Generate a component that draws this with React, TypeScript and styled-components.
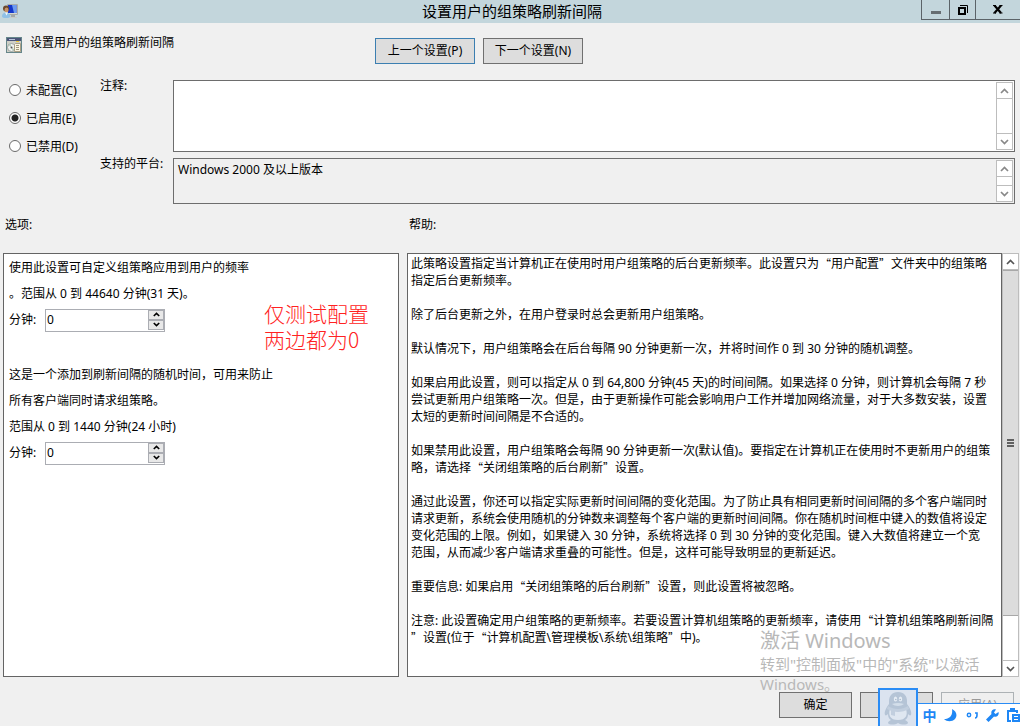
import React from 'react';
import styled, { createGlobalStyle, css } from 'styled-components';

const cjk = '"Noto Sans CJK SC"';
const uiFont = `"Noto Sans", ${cjk}, sans-serif`;

const Global = createGlobalStyle`
  *, *::before, *::after { box-sizing: border-box; }
  body { margin: 0; background: #f0f0f0; color: #000; font: 12px/17px ${uiFont}; }
  button, input, textarea { font: inherit; color: inherit; margin: 0; padding: 0; border-radius: 0; }
  h1, h2, p, fieldset { margin: 0; padding: 0; border: 0; font-weight: 400; font-size: inherit; }
`;

const Window = styled.div`
  position: relative;
  display: flex;
  flex-direction: column;
  min-height: 100vh;
  overflow: hidden;
`;

const TitleBar = styled.header`
  display: grid;
  grid-template-columns: 103px 1fr 99px;
  height: 23px;
  background: #c3d6dc;
`;

const TitleIcon = styled.div`
  padding: 3px 2px;
  line-height: 0;
`;

const Title = styled.h1`
  text-align: center;
  && { font-size: 15px; }
  line-height: 23px;
`;

const WindowControls = styled.div`
  display: grid;
  grid-template-columns: 28px 26px 1fr;
  height: 20px;
  border: solid #5b6368;
  border-width: 0 0 1px 1px;
`;

const ControlButton = styled.button`
  display: flex;
  align-items: center;
  justify-content: center;
  border: solid #5b6368;
  border-width: 0 1px 0 0;
  background: transparent;
  &:last-child { border-right: 0; }
`;

const Heading = styled.section`
  display: grid;
  grid-template-columns: 369px 1fr;
  padding: 14px 6px 0;
`;

const PolicyName = styled.h2`
  display: flex;
  gap: 8px;
  line-height: 12px;
  svg { flex: none; }
`;

const ButtonRow = styled.div`
  display: flex;
  gap: 8px;
  padding-top: 1px;
`;

const PushButton = styled.button<{ $wide?: boolean; $focused?: boolean }>`
  width: ${p => (p.$wide ? 100 : 73)}px;
  height: 26px;
  border: 1px solid ${p => (p.$focused ? '#3c7fb1' : '#707070')};
  background: #ddd;
  line-height: 22px;
  &:disabled { border-color: #adb2b5; background: #efefef; color: #9a9a9a; }
`;

const Settings = styled.section`
  display: grid;
  grid-template-columns: 91px 1fr;
  padding: 16px 5px 0 9px;
`;

const StateGroup = styled.fieldset`
  display: flex;
  flex-direction: column;
`;

const RadioLabel = styled.label`
  display: flex;
  align-items: center;
  gap: 5px;
  height: 28px;
  &:first-child { height: 20px; margin-bottom: 4px; }
`;

const Radio = styled.input`
  appearance: none;
  width: 12px;
  height: 12px;
  border: 1px solid #6a6a6a;
  border-radius: 50%;
  background: #fff;
  &:checked { background: radial-gradient(circle, #222 0 3px, #fff 4px); }
`;

const Fields = styled.div`
  display: flex;
  flex-direction: column;
  gap: 6px;
`;

const FieldRow = styled.div`
  display: grid;
  grid-template-columns: 73px 1fr;
  line-height: 12px;
`;

const MemoFrame = styled.div<{ $readOnly?: boolean }>`
  display: flex;
  height: ${p => (p.$readOnly ? 46 : 72)}px;
  padding: 1px;
  border: 1px solid #6d6d6d;
  background: ${p => (p.$readOnly ? '#f0f0f0' : '#fff')};
`;

const Memo = styled.textarea`
  flex: 1;
  min-width: 0;
  padding: 1px 3px;
  border: 0;
  outline: 0;
  resize: none;
  overflow: hidden;
  background: transparent;
  line-height: 17px;
`;

const Bar = styled.div<{ $large?: boolean }>`
  display: flex;
  flex-direction: column;
  flex: none;
  width: 17px;
  background: #fff;
  border: 1px solid #bdbdbd;
  color: ${p => (p.$large ? '#555' : '#888')};
`;

const BarButton = styled.button<{ $down?: boolean }>`
  display: flex;
  flex: none;
  align-items: center;
  justify-content: center;
  height: 16px;
  border: 0 solid #bdbdbd;
  background: #fff;
  ${p => (p.$down ? css`border-top-width: 1px;` : css`border-bottom-width: 1px;`)}
`;

const BarTrack = styled.div`
  display: flex;
  flex-direction: column;
  flex: 1;
`;

const BarThumb = styled.div`
  display: flex;
  align-items: center;
  justify-content: center;
  flex: 346;
  border: solid #a8a8a8;
  border-width: 1px 0;
  background: #dcdcdc;
  & + div { flex: 44; }
`;

const columns = css`
  display: grid;
  grid-template-columns: 396fr 612fr;
  column-gap: 8px;
  padding: 0 1px 0 3px;
`;

const PanelTitles = styled.div`
  ${columns}
  padding-top: 12px;
  padding-bottom: 20px;
  h2 { padding-left: 2px; }
`;

const Panels = styled.main`
  ${columns}
  flex: 1;
`;

const OptionsPanel = styled.section`
  position: relative;
  padding: 1px 5px;
  border: 1px solid #646464;
  background: #fff;
`;

const OptionGroup = styled.div`
  margin-bottom: 29px;
  line-height: 26px;
`;

const SpinRow = styled.div`
  display: flex;
  align-items: center;
  height: 26px;
  label { width: 36px; }
`;

const SpinBox = styled.div`
  display: flex;
  width: 120px;
  height: 23px;
  border: 1px solid #abadb3;
  background: #fff;
  input { flex: 1; min-width: 0; padding: 0 1px; border: 0; outline: 0; background: transparent; }
`;

const SpinButtons = styled.div`
  display: flex;
  flex-direction: column;
  width: 16px;
  padding-bottom: 1px;
  button {
    display: flex;
    flex: 1;
    align-items: center;
    justify-content: center;
    border: 1px solid #abadb3;
    background: #e8e8e8;
  }
`;

const Annotation = styled.p`
  position: absolute;
  left: 260px;
  top: 46px;
  color: #ff2222;
  && { font-size: 21px; font-weight: 300; }
  font-family: ${cjk}, sans-serif;
  line-height: 26px;
  white-space: pre;
`;

const HelpPanel = styled.section`
  display: flex;
`;

const HelpText = styled.div`
  flex: 1;
  min-width: 0;
  padding: 1px 3px;
  border: 1px solid #646464;
  background: #fff;
  white-space: pre;
  p { margin-bottom: 17px; }
`;

const HelpLine = styled.span`
  display: block;
  height: 17px;
`;

const QuoteMark = styled.span<{ $open: boolean }>`
  display: inline-block;
  width: 12px;
  font-family: ${cjk}, sans-serif;
  font-size: 11px;
  line-height: 12px;
  text-align: ${p => (p.$open ? 'right' : 'left')};
`;

const Footer = styled.footer`
  display: flex;
  justify-content: flex-end;
  gap: 8px;
  padding: 15px 6px 8px;
`;

const Watermark = styled.aside`
  position: absolute;
  right: 40px;
  bottom: 32px;
  width: 220px;
  color: #b8b8b8;
  font-size: 15px;
  line-height: 20px;
  white-space: pre;
  pointer-events: none;
  p:first-child { font-size: 20px; line-height: 26px; }
`;

const ImeBar = styled.aside`
  position: absolute;
  right: 0;
  bottom: 0;
  display: flex;
  align-items: flex-end;
`;

const ImeLogo = styled.div`
  width: 40px;
  height: 38px;
  border: 2px solid #2a8cf5;
  border-bottom: 0;
  background: #dbe3ef;
  line-height: 0;
`;

const ImeTools = styled.div`
  width: 102px;
  height: 23px;
  border-top: 1px solid #2a8cf5;
  background: #fff;
  display: flex;
  align-items: center;
  gap: 6px;
  padding-left: 4px;
  color: #1f87f5;
`;

const ImeButton = styled.button`
  display: flex;
  flex: none;
  align-items: center;
  justify-content: center;
  width: 15px;
  height: 20px;
  border: 0;
  background: none;
  && { font: 700 14px/20px ${cjk}, sans-serif; }
`;

const Chevron = ({ down, small }: { down?: boolean; small?: boolean }) => (
  <svg width={small ? 7 : 9} height={small ? 5 : 6} viewBox="0 0 9 6" fill="none" stroke="currentColor" strokeWidth={small ? 2 : 1.7}>
    <path d={down ? 'M1 1L4.5 4.5L8 1' : 'M1 5L4.5 1.5L8 5'} />
  </svg>
);

const ScrollBar = ({ large }: { large?: boolean }) => (
  <Bar $large={large}>
    <BarButton aria-label="向上滚动"><Chevron /></BarButton>
    <BarTrack>
      {large && (
        <>
          <BarThumb>
            <svg width="7" height="8" fill="#606060"><path d="M0 0h7v2H0zM0 3h7v2H0zM0 6h7v2H0z" /></svg>
          </BarThumb>
          <div />
        </>
      )}
    </BarTrack>
    <BarButton $down aria-label="向下滚动"><Chevron down /></BarButton>
  </Bar>
);

const UserMonitorIcon = () => (
  <svg width="17" height="17" viewBox="0 0 17 17">
    <path d="M5.500 1.500h10v10h-10z" fill="#d8d8d0" stroke="#a9aca8" strokeWidth="1" />
    <path d="M6 2h8.500v8H6z" fill="#1537c9" />
    <path d="M10 2h4.500v8H12z" fill="#6d9bf0" />
    <path d="M9 12h4v2H9z" fill="#a5a9a8" />
    <path d="M8 14h7v1H8z" fill="#c9cbc8" />
    <circle cx="4" cy="5.500" r="3" fill="#6b4a2e" />
    <ellipse cx="4.500" cy="7" rx="2" ry="2.500" fill="#c99467" />
    <path d="M0 13.500c0-3 2-4 4-4s4 1 4.500 4c-1 2-8 2-8.500 0z" fill="#8fc0e6" />
    <path d="M3 9.500l1.500 3 1.500-3z" fill="#eef6fb" />
  </svg>
);

const PolicyIcon = () => (
  <svg width="16" height="16" viewBox="0 0 16 16">
    <path d="M0 0h16v16H0z" fill="#66868a" />
    <path d="M1 1h14v3H1z" fill="#4b5578" />
    <path d="M3 2h6v1H3z" fill="#b8c3da" />
    <path d="M1 4h14v11H1z" fill="#cfcfc6" />
    <path d="M10 4h3v1h-3z" fill="#f1c832" />
    <circle cx="5.500" cy="10.500" r="4" fill="#eef0ee" stroke="#9ba3a0" />
    <path d="M5.500 10.500L2.500 8l2-1zM5.500 10.500l3 2-2 1z" fill="#b3cdb8" />
    <circle cx="5.500" cy="10.500" r="1" fill="#555" />
    <path d="M9.500 6.500h5v8h-6v-7z" fill="#fbf5e2" stroke="#a99f85" />
    <path d="M10 8h3v1h-3zM10 10h3v1h-3zM10 12h3v1h-3z" fill="#a0997f" />
  </svg>
);

const PenguinIcon = () => (
  <svg width="36" height="36" viewBox="0 0 36 36">
    <path d="M18 2c-6 0-9 4-9 9v3c-3 4-5 8-4 11 1 1 2 0 3-1 0 3 1 5 3 6-2 1-3 2-3 3 1 2 7 2 10 0 3 2 9 2 10 0 0-1-1-2-3-3 2-1 3-3 3-6 1 1 2 2 3 1 1-3-1-7-4-11v-3c0-5-3-9-9-9z" fill="#b5c4d6" />
    <path d="M10 19c5 3 11 3 16 0 2 6 0 11-8 11s-10-5-8-11z" fill="#dfe7f1" />
    <ellipse cx="15.500" cy="9" rx="1.700" ry="2.500" fill="#e6edf5" />
    <ellipse cx="20.500" cy="9" rx="1.700" ry="2.500" fill="#e6edf5" />
    <circle cx="15.800" cy="9.500" r=".8" fill="#a9bace" />
    <circle cx="20.200" cy="9.500" r=".8" fill="#a9bace" />
    <path d="M12 14c4-1.500 8-1.500 12 0-3 2.500-9 2.500-12 0z" fill="#d3deea" />
    <path d="M8 16c6 4 14 4 20 0l1 3c-7 4-15 4-22 0z" fill="#c2cfdf" />
    <path d="M11 20l4 1v5l-4-1z" fill="#c2cfdf" />
  </svg>
);

const rich = (text: string) =>
  text.split(/([“”])/).map((part, i) =>
    part === '“' || part === '”' ? <QuoteMark key={i} $open={part === '“'}>{part}</QuoteMark> : part,
  );

const help = [
  '此策略设置指定当计算机正在使用时用户组策略的后台更新频率。此设置只为“用户配置”文件夹中的组策略\n指定后台更新频率。',
  '除了后台更新之外，在用户登录时总会更新用户组策略。',
  '默认情况下，用户组策略会在后台每隔 90 分钟更新一次，并将时间作 0 到 30 分钟的随机调整。',
  '如果启用此设置，则可以指定从 0 到 64,800 分钟(45 天)的时间间隔。如果选择 0 分钟，则计算机会每隔 7 秒\n尝试更新用户组策略一次。但是，由于更新操作可能会影响用户工作并增加网络流量，对于大多数安装，设置\n太短的更新时间间隔是不合适的。',
  '如果禁用此设置，用户组策略会每隔 90 分钟更新一次(默认值)。要指定在计算机正在使用时不更新用户的组策\n略，请选择“关闭组策略的后台刷新”设置。',
  '通过此设置，你还可以指定实际更新时间间隔的变化范围。为了防止具有相同更新时间间隔的多个客户端同时\n请求更新，系统会使用随机的分钟数来调整每个客户端的更新时间间隔。你在随机时间框中键入的数值将设定\n变化范围的上限。例如，如果键入 30 分钟，系统将选择 0 到 30 分钟的变化范围。键入大数值将建立一个宽\n范围，从而减少客户端请求重叠的可能性。但是，这样可能导致明显的更新延迟。',
  '重要信息: 如果启用“关闭组策略的后台刷新”设置，则此设置将被忽略。',
  '注意: 此设置确定用户组策略的更新频率。若要设置计算机组策略的更新频率，请使用“计算机组策略刷新间隔\n”设置(位于“计算机配置\\管理模板\\系统\\组策略”中)。',
];

const states = ['未配置(C)', '已启用(E)', '已禁用(D)'];

const Spinner = ({ id }: { id: string }) => (
  <SpinRow>
    <label htmlFor={id}>分钟:</label>
    <SpinBox>
      <input id={id} type="text" defaultValue="0" />
      <SpinButtons>
        <button aria-label="增加"><Chevron small /></button>
        <button aria-label="减少"><Chevron small down /></button>
      </SpinButtons>
    </SpinBox>
  </SpinRow>
);

export default function App() {
  return (
    <Window>
      <Global />
      <TitleBar>
        <TitleIcon><UserMonitorIcon /></TitleIcon>
        <Title>设置用户的组策略刷新间隔</Title>
        <WindowControls>
          <ControlButton aria-label="最小化">
            <svg width="10" height="12"><path d="M0 7h10v3H0z" fill="#666d71" /></svg>
          </ControlButton>
          <ControlButton aria-label="还原">
            <svg width="10" height="10" fill="none" stroke="#000">
              <path d="M1 3h6v6H1z" strokeWidth="2" />
              <path d="M2 .5h7.500V8" />
            </svg>
          </ControlButton>
          <ControlButton aria-label="关闭">
            <svg width="10" height="9" viewBox="0 0 10 9" fill="none" stroke="#000">
              <path d="M1.500 .5L8 8M8 .5L1.500 8" strokeWidth="2.200" />
              <path d="M0 .5h3M6.500 .5h3M0 8h3M6.500 8h3" />
            </svg>
          </ControlButton>
        </WindowControls>
      </TitleBar>

      <Heading>
        <PolicyName><PolicyIcon />设置用户的组策略刷新间隔</PolicyName>
        <ButtonRow>
          <PushButton $wide $focused>上一个设置(P)</PushButton>
          <PushButton $wide>下一个设置(N)</PushButton>
        </ButtonRow>
      </Heading>

      <Settings>
        <StateGroup>
          {states.map((s, i) => (
            <RadioLabel key={s}>
              <Radio type="radio" name="state" defaultChecked={i === 1} />
              {s}
            </RadioLabel>
          ))}
        </StateGroup>
        <Fields>
          <FieldRow>
            <label htmlFor="comment">注释:</label>
            <MemoFrame>
              <Memo id="comment" />
              <ScrollBar />
            </MemoFrame>
          </FieldRow>
          <FieldRow>
            <label htmlFor="platform">支持的平台:</label>
            <MemoFrame $readOnly>
              <Memo id="platform" readOnly defaultValue="Windows 2000 及以上版本" />
              <ScrollBar />
            </MemoFrame>
          </FieldRow>
        </Fields>
      </Settings>

      <PanelTitles>
        <h2>选项:</h2>
        <h2>帮助:</h2>
      </PanelTitles>

      <Panels>
        <OptionsPanel>
          <OptionGroup>
            <p>使用此设置可自定义组策略应用到用户的频率</p>
            <p>。范围从 0 到 44640 分钟(31 天)。</p>
            <Spinner id="interval" />
          </OptionGroup>
          <OptionGroup>
            <p>这是一个添加到刷新间隔的随机时间，可用来防止</p>
            <p>所有客户端同时请求组策略。</p>
            <p>范围从 0 到 1440 分钟(24 小时)</p>
            <Spinner id="offset" />
          </OptionGroup>
          <Annotation>{'仅测试配置\n两边都为0'}</Annotation>
        </OptionsPanel>
        <HelpPanel>
          <HelpText>
            {help.map(t => (
              <p key={t}>
                {t.split('\n').map(line => <HelpLine key={line}>{rich(line)}</HelpLine>)}
              </p>
            ))}
          </HelpText>
          <ScrollBar large />
        </HelpPanel>
      </Panels>

      <Footer>
        <PushButton>确定</PushButton>
        <PushButton>取消</PushButton>
        <PushButton disabled>应用(A)</PushButton>
      </Footer>

      <Watermark>
        <p>激活 Windows</p>
        <p>转到"控制面板"中的"系统"以激活</p>
        <p>Windows。</p>
      </Watermark>

      <ImeBar>
        <ImeLogo><PenguinIcon /></ImeLogo>
        <ImeTools>
          <ImeButton>中</ImeButton>
          <ImeButton aria-label="半角">
            <svg width="13" height="13"><path d="M8 0c4 2 6 6 3 10-3 3-8 3-11 0 6 0 9-4 8-10z" fill="currentColor" /></svg>
          </ImeButton>
          <ImeButton aria-label="标点">
            <svg width="12" height="10" fill="none" stroke="currentColor"><circle cx="3" cy="5" r="1.700" strokeWidth="1.400" /><path d="M9 3h2v2c0 2-1 3-2 3" strokeWidth="1.600" /></svg>
          </ImeButton>
          <ImeButton aria-label="设置">
            <svg width="13" height="13"><path d="M12.500 3l-3 2-1.500-1.500L10 .5C7-.5 4.500 2 5.500 5L0 10.500 2.500 13 8 7.500c3 1 5.500-1.500 4.500-4.500z" fill="currentColor" /></svg>
          </ImeButton>
          <ImeButton aria-label="剪贴板">
            <svg width="13" height="14" fill="currentColor"><path d="M0 2h3V0h5v2h3v3H9V4H2v8h2v2H0z" /><path d="M5 6h8v8H5zM7 8v1h4V8zM7 11v1h4v-1z" fillRule="evenodd" /></svg>
          </ImeButton>
        </ImeTools>
      </ImeBar>
    </Window>
  );
}
